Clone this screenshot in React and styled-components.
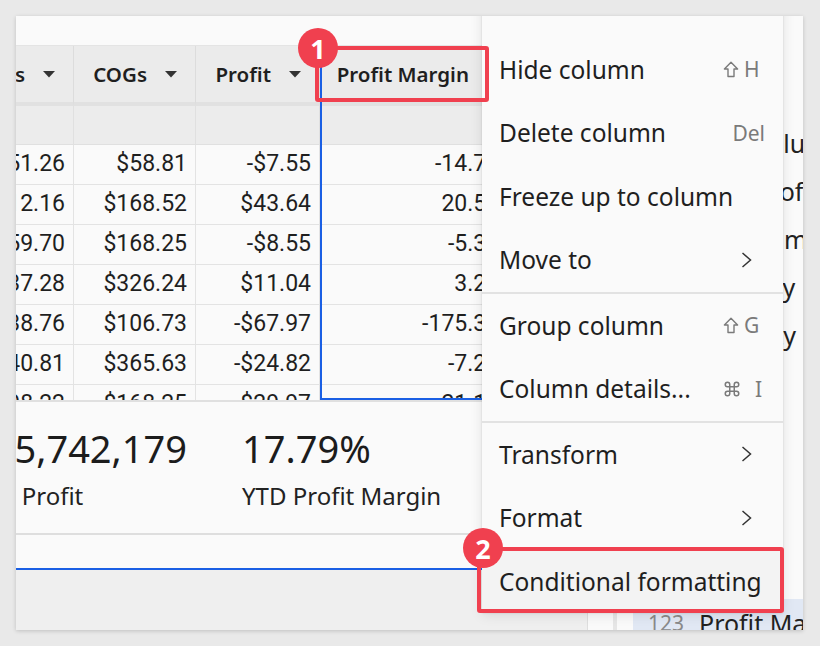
import React from "react";
import styled, { createGlobalStyle } from "styled-components";

const GlobalStyle = createGlobalStyle`
  html, body { margin: 0; padding: 0; background: #e9e9e9; }
  body { font-family: "Noto Sans", "DejaVu Sans", sans-serif; color: #222; }
  * { box-sizing: border-box; }
`;

const Page = styled.div`
  width: 820px;
  height: 646px;
  padding: 16px 0 0 16px;
  background: #e9e9e9;
`;

const Frame = styled.div`
  position: relative;
  width: 787px;
  height: 614px;
  overflow: hidden;
  display: flex;
  background: #fafafa;
  box-shadow: 0 1px 4px rgba(0, 0, 0, 0.18);
`;

const MainPanel = styled.div`
  width: 572px;
  flex: none;
  display: flex;
  flex-direction: column;
  border-right: 1px solid #dedede;
`;

const TopBar = styled.div`
  height: 30px;
  flex: none;
  background: #fafafa;
  border-bottom: 1px solid #e4e4e4;
`;

const TableViewport = styled.div`
  position: relative;
  height: 354px;
  flex: none;
  overflow: hidden;
`;

const Grid = styled.div`
  display: grid;
  grid-template-columns: 118px 122px 124px 205px 140px;
  margin-left: -60px;
  width: max-content;
`;

const HeadCell = styled.div`
  height: 60px;
  display: flex;
  align-items: center;
  justify-content: flex-end;
  gap: 18px;
  padding-right: ${(p) => p.$padRight || 18}px;
  background: #ebebeb;
  border-right: 1px solid #dcdcdc;
  border-bottom: 4px solid #e1e1e1;
  font-size: 20.5px;
  font-weight: 600;
  color: #1f1f1f;
  white-space: nowrap;
  overflow: hidden;
`;

const SubCell = styled.div`
  height: 39px;
  background: #ececec;
  border-right: 1px solid #e0e0e0;
  border-bottom: 1px solid #e0e0e0;
`;

const DataCell = styled.div`
  height: 40px;
  display: flex;
  align-items: center;
  justify-content: flex-end;
  padding: 0 8px 3px 0;
  background: #fafafa;
  border-right: 1px solid #e3e3e3;
  border-bottom: 1px solid #e3e3e3;
  font-family: Roboto, "Liberation Sans", sans-serif;
  font-size: 23px;
  color: #1f1f1f;
  white-space: nowrap;
  overflow: hidden;
`;

const Selection = styled.div`
  position: absolute;
  left: 304px;
  top: 0;
  bottom: 0;
  width: 280px;
  border: 2px solid #1a5fe4;
  pointer-events: none;
`;

const KpiSection = styled.div`
  height: 135px;
  flex: none;
  padding-top: 24px;
  border-top: 2px solid #e0e0e0;
  border-bottom: 2px solid #dedede;
  display: flex;
  margin-left: -45px;
`;

const Kpi = styled.div`
  width: ${(p) => p.$width}px;
  flex: none;
  display: flex;
  flex-direction: column;
  gap: 10px;
`;

const KpiValue = styled.div`
  font-size: 38px;
  line-height: 44px;
  color: #1c1c1c;
  white-space: nowrap;
`;

const KpiLabel = styled.div`
  font-size: 24px;
  line-height: 32px;
  color: #222;
  white-space: nowrap;
`;

const Spacer = styled.div`
  height: 33px;
  flex: none;
  background: #fafafa;
`;

const BottomArea = styled.div`
  flex: 1;
  background: #efefef;
  border-top: 2px solid #1a5fe4;
`;

const Strip = styled.div`
  width: 29px;
  flex: none;
  background: #fafafa;
  border-right: 4px solid #e6e6e6;
`;

const SidePanel = styled.div`
  flex: 1;
  min-width: 0;
  padding-top: 103px;
  background: #fafafa;
  overflow: hidden;
`;

const SideItem = styled.div`
  height: 48px;
  margin-left: 16px;
  padding-left: 15px;
  display: flex;
  align-items: center;
  gap: 15px;
  white-space: nowrap;
  background: ${(p) => (p.$active ? "#e1e8f4" : "transparent")};
`;

const TypeTag = styled.span`
  font-size: 21px;
  color: #8a8a8a;
`;

const SideName = styled.span`
  font-size: 25px;
  color: #222;
`;

const Menu = styled.div`
  position: absolute;
  left: 466px;
  top: -50px;
  width: 301px;
  padding: 8px 0 0;
  background: #fafafa;
  box-shadow: 0 0 2px rgba(0, 0, 0, 0.12), 0 2px 12px rgba(0, 0, 0, 0.1);
  z-index: 2;
`;

const MenuItem = styled.div`
  height: 63.5px;
  display: flex;
  align-items: center;
  justify-content: space-between;
  padding: 0 18px 0 17px;
  font-size: 24.5px;
  color: #1f1f1f;
  white-space: nowrap;
  background: ${(p) => (p.$highlight ? "#f3f3f3" : "transparent")};
`;

const Separator = styled.div`
  height: 2px;
  background: #e2e2e2;
`;

const Shortcut = styled.span`
  width: 42px;
  display: flex;
  align-items: center;
  justify-content: ${(p) => (p.$end ? "flex-end" : "flex-start")};
  gap: ${(p) => p.$gap || 5}px;
  font-size: 21px;
  color: #7a7a7a;
`;

const Chevron = styled.svg`
  margin-right: 13px;
`;

const Callout = styled.div`
  position: absolute;
  left: ${(p) => p.$x}px;
  top: ${(p) => p.$y}px;
  width: ${(p) => p.$w}px;
  height: ${(p) => p.$h}px;
  border: 4px solid #f0404f;
  border-radius: 3px;
  z-index: 3;
  pointer-events: none;
`;

const Badge = styled.div`
  position: absolute;
  left: ${(p) => p.$x}px;
  top: ${(p) => p.$y}px;
  width: 40px;
  height: 40px;
  border-radius: 50%;
  background: #f0404f;
  color: #fff;
  display: flex;
  align-items: center;
  justify-content: center;
  font-size: 27px;
  font-weight: 700;
  z-index: 4;
`;

const Caret = () => (
  <svg width="12" height="7" viewBox="0 0 12 7">
    <polygon points="0,0 12,0 6,6.5" fill="#333" />
  </svg>
);

const ShiftIcon = () => (
  <svg width="16" height="17" viewBox="0 0 16 17">
    <path
      d="M8 1.2 L14.6 8 H11 V15.5 H5 V8 H1.4 Z"
      fill="none"
      stroke="#7a7a7a"
      strokeWidth="1.4"
      strokeLinejoin="round"
    />
  </svg>
);

const CommandIcon = () => (
  <svg width="18" height="18" viewBox="0 0 24 24">
    <path
      d="M15 6v12a3 3 0 1 0 3-3H6a3 3 0 1 0 3 3V6a3 3 0 1 0-3 3h12a3 3 0 1 0-3-3"
      fill="none"
      stroke="#7a7a7a"
      strokeWidth="2"
      strokeLinecap="round"
      strokeLinejoin="round"
    />
  </svg>
);

const ChevronRight = () => (
  <Chevron width="11" height="16" viewBox="0 0 11 16">
    <polyline
      points="1.5,1 9.5,8 1.5,15"
      fill="none"
      stroke="#333"
      strokeWidth="1.5"
    />
  </Chevron>
);

const headers = [
  { label: "Sales" },
  { label: "COGs" },
  { label: "Profit" },
  { label: "Profit Margin", pad: 25 },
  { label: "Store" },
];

const rows = [
  ["$51.26", "$58.81", "-$7.55", "-14.73%", ""],
  ["$212.16", "$168.52", "$43.64", "20.57%", ""],
  ["$159.70", "$168.25", "-$8.55", "-5.35%", ""],
  ["$337.28", "$326.24", "$11.04", "3.27%", ""],
  ["$38.76", "$106.73", "-$67.97", "-175.36%", ""],
  ["$340.81", "$365.63", "-$24.82", "-7.28%", ""],
  ["$198.22", "$168.25", "$29.97", "21.16%", ""],
];

const sideItems = [
  "Unit Value",
  "Unit Profit",
  "Unit Sum",
  "Sale Qty",
  "Unit Qty",
  "Date",
  "Store",
  "Cost",
  "Price",
  "COGs",
  "Profit Margin",
];

export default function App() {
  return (
    <>
      <GlobalStyle />
      <Page>
        <Frame>
          <MainPanel>
            <TopBar />
            <TableViewport>
              <Grid>
                {headers.map((h) => (
                  <HeadCell key={h.label} $padRight={h.pad}>
                    <span>{h.label}</span>
                    <Caret />
                  </HeadCell>
                ))}
                {headers.map((h) => (
                  <SubCell key={"s" + h.label} />
                ))}
                {rows.map((r, i) =>
                  r.map((v, j) => <DataCell key={i + "-" + j}>{v}</DataCell>)
                )}
              </Grid>
              <Selection />
            </TableViewport>
            <KpiSection>
              <Kpi $width={271}>
                <KpiValue>$15,742,179</KpiValue>
                <KpiLabel>YTD Profit</KpiLabel>
              </Kpi>
              <Kpi $width={300}>
                <KpiValue>17.79%</KpiValue>
                <KpiLabel>YTD Profit Margin</KpiLabel>
              </Kpi>
            </KpiSection>
            <Spacer />
            <BottomArea />
          </MainPanel>
          <Strip />
          <SidePanel>
            {sideItems.map((n, i) => (
              <SideItem key={n} $active={i === sideItems.length - 1}>
                <TypeTag>123</TypeTag>
                <SideName>{n}</SideName>
              </SideItem>
            ))}
          </SidePanel>

          <Menu>
            <MenuItem>Rename column</MenuItem>
            <MenuItem>
              Hide column
              <Shortcut>
                <ShiftIcon />H
              </Shortcut>
            </MenuItem>
            <MenuItem>
              Delete column
              <Shortcut $end>Del</Shortcut>
            </MenuItem>
            <MenuItem>Freeze up to column</MenuItem>
            <MenuItem>
              Move to
              <ChevronRight />
            </MenuItem>
            <Separator />
            <MenuItem>
              Group column
              <Shortcut>
                <ShiftIcon />G
              </Shortcut>
            </MenuItem>
            <MenuItem>
              Column details...
              <Shortcut $gap={14}>
                <CommandIcon />I
              </Shortcut>
            </MenuItem>
            <Separator />
            <MenuItem>
              Transform
              <ChevronRight />
            </MenuItem>
            <MenuItem>
              Format
              <ChevronRight />
            </MenuItem>
            <MenuItem $highlight>Conditional formatting</MenuItem>
          </Menu>

          <Callout $x={299} $y={30} $w={174} $h={56} />
          <Badge $x={282} $y={12}>1</Badge>
          <Callout $x={461} $y={531} $w={307} $h={66} />
          <Badge $x={447} $y={512}>2</Badge>
        </Frame>
      </Page>
    </>
  );
}
